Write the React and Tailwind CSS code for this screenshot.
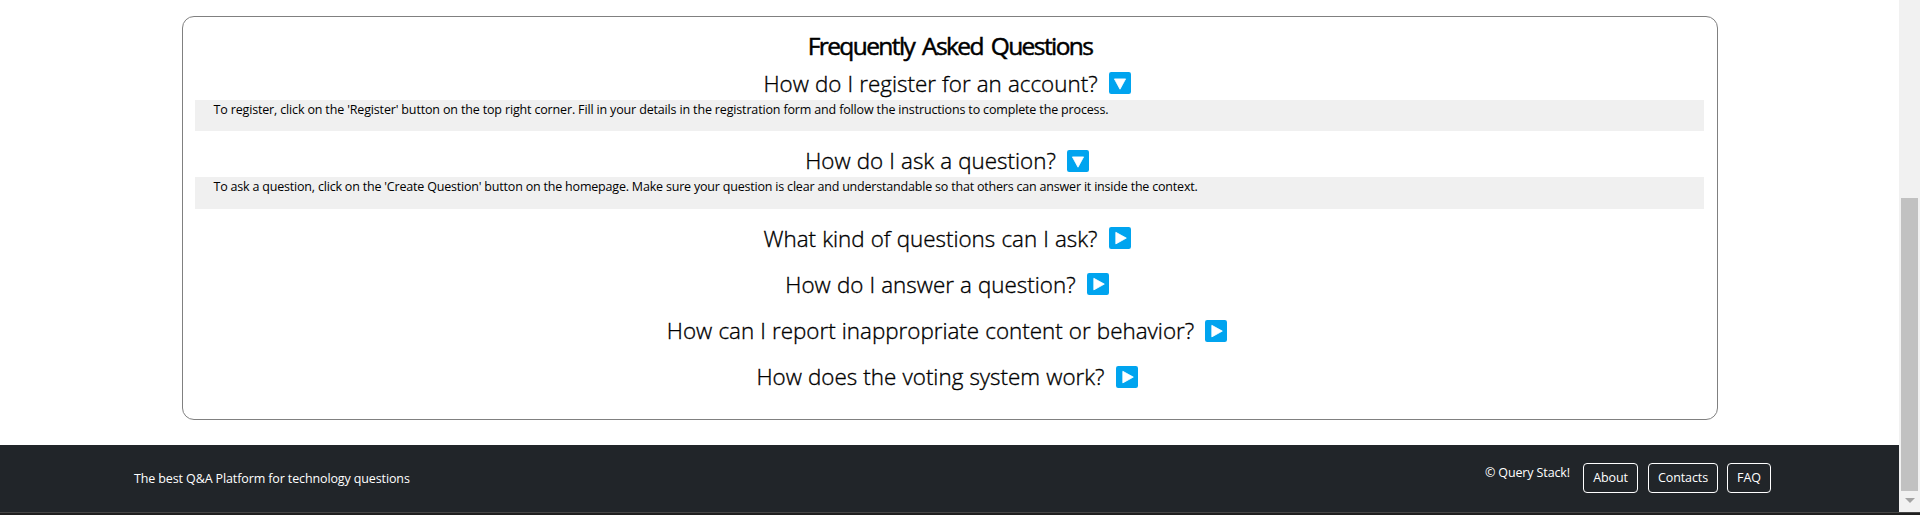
import React from 'react';

const faqs = [
  {
    question: 'How do I register for an account?',
    answer:
      "To register, click on the 'Register' button on the top right corner. Fill in your details in the registration form and follow the instructions to complete the process.",
    tracking: 'tracking-[-0.155px]',
  },
  {
    question: 'How do I ask a question?',
    answer:
      "To ask a question, click on the 'Create Question' button on the homepage. Make sure your question is clear and understandable so that others can answer it inside the context.",
    tracking: 'tracking-[-0.195px]',
  },
  { question: 'What kind of questions can I ask?' },
  { question: 'How do I answer a question?' },
  { question: 'How can I report inappropriate content or behavior?' },
  { question: 'How does the voting system work?' },
];

function ToggleIcon({ open }) {
  return (
    <svg viewBox="0 0 22 22" className="mr-[4px] mb-[0.5px] ml-[11px] size-[22px] shrink-0" aria-hidden="true">
      <rect width="22" height="22" rx="2.2" fill="#00a4ef" />
      <path
        d={open ? 'M5.4 6.9H16.6L11 17.2Z' : 'M6.8 5.3V16.9L17.3 11.1Z'}
        fill="#fff"
        stroke="#fff"
        strokeWidth="0.8"
        strokeLinejoin="round"
      />
    </svg>
  );
}

function FaqItem({ question, answer, tracking }) {
  return (
    <div className="mb-[13.15px]">
      <button type="button" className="flex h-[33px] w-full items-center justify-center">
        <span className="text-[22.4px] leading-[33px] font-light whitespace-nowrap [-webkit-text-stroke:0.35px_black] [word-spacing:0.3px]">
          {question}
        </span>
        <ToggleIcon open={Boolean(answer)} />
      </button>
      {answer && (
        <p className={`h-[31.35px] bg-[#f0f0f0] pl-[19px] text-[12.5px] leading-[19px] whitespace-nowrap ${tracking}`}>
          {answer}
        </p>
      )}
    </div>
  );
}

function FooterLink({ children, className }) {
  return (
    <a
      href="#"
      className={`flex h-[30px] items-center justify-center rounded-[4px] border border-white text-[12.5px] leading-[18px] tracking-[-0.1px] ${className}`}
    >
      {children}
    </a>
  );
}

function Scrollbar() {
  return (
    <div className="flex w-[21px] shrink-0 flex-col items-center bg-[#f1f1f1]">
      <div className="mt-[198px] h-[293px] w-[17px] bg-[#c1c1c1]" />
      <svg viewBox="0 0 10 5" className="mt-[7px] h-[5px] w-[10px]" aria-hidden="true">
        <path d="M0 0H10L5 5Z" fill="#a3a3a3" />
      </svg>
    </div>
  );
}

export default function App() {
  return (
    <div className="flex h-[515px] flex-col overflow-hidden bg-white font-['Open_Sans','Noto_Sans',sans-serif] text-black">
      <div className="flex h-[512px]">
        <div className="flex grow flex-col">
          <main className="mx-auto mt-4 h-[404px] w-[1536px] rounded-[12px] border border-[#808080] pt-[14px] pr-[13px] pl-[12px]">
            <h2 className="mb-[6px] pl-[2px] text-center text-[24.5px] leading-[30px] font-medium tracking-[-1.58px] [-webkit-text-stroke:0.5px_black] [word-spacing:3px]">
              Frequently Asked Questions
            </h2>
            {faqs.map((faq) => (
              <FaqItem key={faq.question} {...faq} />
            ))}
          </main>
          <footer className="mt-auto flex h-[67px] justify-between bg-[#212529] pr-[128px] pl-[134px] text-[12.5px] tracking-[-0.12px] text-white">
            <p className="mt-[25px] leading-[18px]">The best Q&amp;A Platform for technology questions</p>
            <div className="mt-[18px] flex">
              <span className="mt-[1px] mr-[13px] leading-[18px]">© Query Stack!</span>
              <FooterLink className="mr-[10px] w-[55px]">About</FooterLink>
              <FooterLink className="mr-[9px] w-[70px]">Contacts</FooterLink>
              <FooterLink className="w-[44px]">FAQ</FooterLink>
            </div>
          </footer>
        </div>
        <Scrollbar />
      </div>
      <div className="h-[3px] border-t border-[#454545] bg-[#1f1f1f]" />
    </div>
  );
}
